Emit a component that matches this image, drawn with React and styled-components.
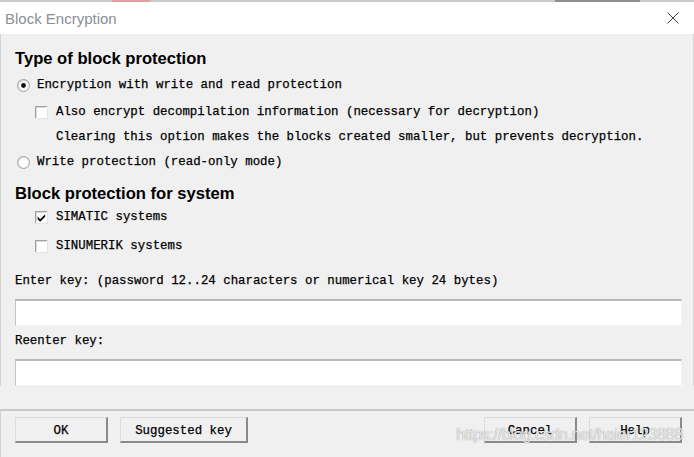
import React from "react";
import styled, { createGlobalStyle } from "styled-components";

const Global = createGlobalStyle`
  html, body { margin: 0; padding: 0; background: #f0f0f0; }
  body { width: 694px; height: 457px; overflow: hidden; }
`;

const Window = styled.div`
  position: relative;
  width: 694px;
  height: 457px;
  display: flex;
  flex-direction: column;
  background: #f0f0f0;
  font-family: "Liberation Mono", "DejaVu Sans Mono", monospace;
  font-size: 12.4px;
  color: #000;
`;

const TopStrip = styled.div`
  flex: none;
  height: 2px;
  background: linear-gradient(90deg, #c9c9c9 0 112px, #d8a4a4 112px 150px, #c9c9c9 150px 555px, #8d8d8d 555px 640px, #c9c9c9 640px);
`;

const TitleBar = styled.div`
  flex: none;
  height: 32px;
  background: #fff;
  display: flex;
  align-items: center;
  justify-content: space-between;
  padding: 0 15px 0 5px;
`;

const Title = styled.span`
  font-family: "Liberation Sans", Arial, sans-serif;
  font-size: 15px;
  color: #8a8f96;
`;

const Content = styled.div`
  flex: none;
  display: flex;
  flex-direction: column;
  padding: 0 11px 0 14px;
  border-left: 1px solid #d4d4d4;
  border-right: 1px solid #d4d4d4;
`;

const Heading = styled.div`
  font-family: "Liberation Sans", Arial, sans-serif;
  font-weight: bold;
  font-size: 16.6px;
  line-height: 20px;
  height: 20px;
  margin-top: ${(p) => p.$mt}px;
`;

const MonoText = styled.span`
  -webkit-text-stroke: 0.25px #000;
`;

const Row = styled.div`
  display: flex;
  align-items: center;
  height: 20px;
  margin-top: ${(p) => p.$mt}px;
  padding-left: ${(p) => p.$indent || 0}px;
  gap: ${(p) => p.$gap || 8}px;
  white-space: pre;
`;

const Label = styled.div`
  height: 20px;
  line-height: 20px;
  margin-top: ${(p) => p.$mt}px;
  white-space: pre;
  -webkit-text-stroke: 0.25px #000;
`;

const Input = styled.div`
  height: 27px;
  box-sizing: border-box;
  background: #fff;
  border-top: 2px solid #b9b9b9;
  border-left: 1px solid #c4c4c4;
  border-right: 1px solid #f4f4f4;
  border-bottom: 1px solid #f4f4f4;
  margin-top: ${(p) => p.$mt}px;
`;

const Footer = styled.div`
  flex: 1;
  margin-top: 23px;
  border-top: 2px solid #c8c8c8;
  border-left: 1px solid #d4d4d4;
  display: flex;
  justify-content: space-between;
  align-items: flex-start;
  padding: 6px 12px 0 14px;
`;

const ButtonGroup = styled.div`
  display: flex;
  gap: 12px;
`;

const Button = styled.div`
  width: ${(p) => p.$w}px;
  height: 26px;
  box-sizing: border-box;
  display: flex;
  align-items: center;
  justify-content: center;
  background: #f0f0f0;
  border-top: 1px solid #dcdcdc;
  border-left: 1px solid #dcdcdc;
  border-right: 2px solid #8a8a8a;
  border-bottom: 2px solid #8a8a8a;
  padding-top: 2px;
  -webkit-text-stroke: 0.25px #000;
`;

const Watermark = styled.div`
  position: absolute;
  right: 11px;
  top: 426px;
  font-family: "Liberation Sans", Arial, sans-serif;
  font-size: 16px;
  color: rgba(255, 255, 255, 0.8);
  text-shadow: 0 0 1px rgba(110, 110, 110, 0.9);
  letter-spacing: -0.3px;
  pointer-events: none;
`;

const Radio = ({ checked }) => (
  <svg width="13" height="13" viewBox="0 0 13 13" style={{ marginLeft: 2 }}>
    <defs>
      <linearGradient id={checked ? "rg1" : "rg2"} x1="0" y1="0" x2="1" y2="1">
        <stop offset="0" stopColor="#d0d0d0" />
        <stop offset="1" stopColor="#ffffff" />
      </linearGradient>
    </defs>
    <circle cx="6.5" cy="6.5" r="6" fill={`url(#${checked ? "rg1" : "rg2"})`} stroke="#a4a4a4" strokeWidth="1" />
    <circle cx="6.5" cy="6.5" r="4.4" fill="#fff" />
    {checked && <circle cx="6.5" cy="6.5" r="2.4" fill="#111" />}
  </svg>
);

const Check = ({ checked }) => (
  <svg width="13" height="13" viewBox="0 0 13 13">
    <rect x="0" y="0" width="13" height="13" fill="#e3e3e3" />
    <rect x="0" y="0" width="12" height="12" fill="#a0a0a0" />
    <rect x="1" y="1" width="11" height="11" fill="#fff" />
    <rect x="1" y="1" width="10" height="1" fill="#dadada" />
    <rect x="1" y="1" width="1" height="10" fill="#dadada" />
    {checked && (
      <path d="M2.6 5.6 L5.2 8.2 L10.2 3.2 L10.2 5.8 L5.2 10.8 L2.6 8.2 Z" fill="#000" />
    )}
  </svg>
);

const Close = () => (
  <svg width="12" height="12" viewBox="0 0 12 12">
    <path d="M0.5 0.5 L11.5 11.5 M11.5 0.5 L0.5 11.5" stroke="#444" strokeWidth="1" />
  </svg>
);

export default function App() {
  return (
    <>
      <Global />
      <Window>
        <TopStrip />
        <TitleBar>
          <Title>Block Encryption</Title>
          <Close />
        </TitleBar>
        <Content>
          <Heading $mt={15}>Type of block protection</Heading>
          <Row $mt={6} $gap={7}>
            <Radio checked />
            <MonoText>Encryption with write and read protection</MonoText>
          </Row>
          <Row $mt={7} $indent={20}>
            <Check />
            <MonoText>Also encrypt decompilation information (necessary for decryption)</MonoText>
          </Row>
          <Row $mt={5} $indent={41}>
            <MonoText>Clearing this option makes the blocks created smaller, but prevents decryption.</MonoText>
          </Row>
          <Row $mt={5} $gap={7}>
            <Radio />
            <MonoText>Write protection (read-only mode)</MonoText>
          </Row>
          <Heading $mt={12}>Block protection for system</Heading>
          <Row $mt={3} $indent={20}>
            <Check checked />
            <MonoText>SIMATIC systems</MonoText>
          </Row>
          <Row $mt={9} $indent={20}>
            <Check />
            <MonoText>SINUMERIK systems</MonoText>
          </Row>
          <Label $mt={15}>Enter key: (password 12..24 characters or numerical key 24 bytes)</Label>
          <Input $mt={8} />
          <Label $mt={5}>Reenter key:</Label>
          <Input $mt={8} />
        </Content>
        <Footer>
          <ButtonGroup>
            <Button $w={93}>OK</Button>
            <Button $w={128}>Suggested key</Button>
          </ButtonGroup>
          <ButtonGroup>
            <Button $w={93}>Cancel</Button>
            <Button $w={93}>Help</Button>
          </ButtonGroup>
        </Footer>
        <Watermark>https://blog.csdn.net/haier123888</Watermark>
      </Window>
    </>
  );
}
